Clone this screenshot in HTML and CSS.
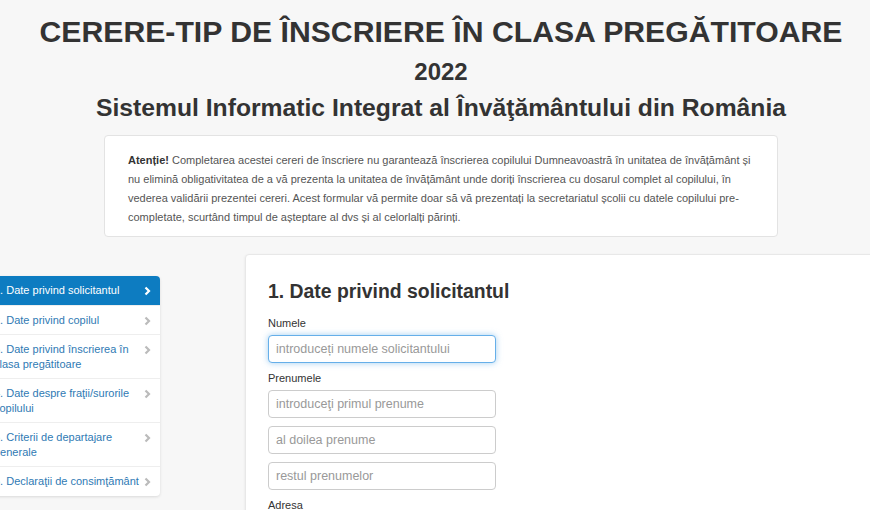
FILE: index.html
```html
<!DOCTYPE html>
<html lang="ro">
<head>
    <meta charset="UTF-8">
    <meta name="viewport" content="width=device-width, initial-scale=1.0">
    <title>Cerere-tip de înscriere în clasa pregătitoare</title>
    <link rel="stylesheet" href="styles.css">
</head>
<body>
    <div class="page">
        <div class="header">
            <h1>CERERE-TIP DE ÎNSCRIERE ÎN CLASA PREGĂTITOARE</h1>
            <h2>2022</h2>
            <h3>Sistemul Informatic Integrat al Învăţământului din România</h3>
        </div>

        <div class="notice">
            <p><strong>Atenție!</strong> Completarea acestei cereri de înscriere nu garantează înscrierea copilului Dumneavoastră în unitatea de învățământ și nu elimină obligativitatea de a vă prezenta la unitatea de învățământ unde doriți înscrierea cu dosarul complet al copilului, în vederea validării prezentei cereri. Acest formular vă permite doar să vă prezentați la secretariatul școlii cu datele copilului pre-completate, scurtând timpul de așteptare al dvs și al celorlalți părinți.</p>
        </div>

        <div class="content">
            <div class="steps">
                <a class="step active" href="#">1. Date privind solicitantul
                    <svg class="chev" viewBox="0 0 7 10"><path d="M1.5 1.5 L5 5 L1.5 8.5"/></svg></a>
                <a class="step" href="#">2. Date privind copilul
                    <svg class="chev" viewBox="0 0 7 10"><path d="M1.5 1.5 L5 5 L1.5 8.5"/></svg></a>
                <a class="step" href="#">3. Date privind înscrierea în clasa pregătitoare
                    <svg class="chev" viewBox="0 0 7 10"><path d="M1.5 1.5 L5 5 L1.5 8.5"/></svg></a>
                <a class="step" href="#">4. Date despre fraţii/surorile copilului
                    <svg class="chev" viewBox="0 0 7 10"><path d="M1.5 1.5 L5 5 L1.5 8.5"/></svg></a>
                <a class="step" href="#">5. Criterii de departajare generale
                    <svg class="chev" viewBox="0 0 7 10"><path d="M1.5 1.5 L5 5 L1.5 8.5"/></svg></a>
                <a class="step" href="#">6. Declaraţii de consimţământ
                    <svg class="chev" viewBox="0 0 7 10"><path d="M1.5 1.5 L5 5 L1.5 8.5"/></svg></a>
            </div>

            <div class="panel">
                <h4>1. Date privind solicitantul</h4>
                <label>Numele</label>
                <input class="field focused" type="text" placeholder="introduceți numele solicitantului">
                <label>Prenumele</label>
                <input class="field" type="text" placeholder="introduceţi primul prenume">
                <input class="field" type="text" placeholder="al doilea prenume">
                <input class="field" type="text" placeholder="restul prenumelor">
                <label>Adresa</label>
            </div>
        </div>
    </div>
</body>
</html>
```

FILE: styles.css
```css
* {
    margin: 0;
    padding: 0;
    box-sizing: border-box;
}

body {
    font-family: "Liberation Sans", Arial, sans-serif;
    background: #f7f7f7;
    color: #333;
    overflow: hidden;
}

.page {
    width: 870px;
    height: 510px;
    overflow: hidden;
}

.header {
    text-align: center;
    padding: 14px 0 0 12px;
}

.header h1 {
    font-size: 30.2px;
    line-height: 36px;
    font-weight: bold;
    color: #333;
}

.header h2 {
    font-size: 24px;
    line-height: 28px;
    margin-top: 8px;
}

.header h3 {
    font-size: 24.7px;
    line-height: 32px;
    margin-top: 6px;
}

.notice {
    margin: 11px 92px 0 104px;
    background: #fff;
    border: 1px solid #e3e3e3;
    border-radius: 4px;
    padding: 15px 23px 9px 23px;
}

.notice p {
    font-size: 11px;
    line-height: 19px;
    color: #555;
}

.notice strong {
    color: #333;
}

.content {
    display: flex;
    align-items: flex-start;
    margin-top: 17px;
}

.steps {
    flex-shrink: 0;
    width: 176px;
    margin-left: -16px;
    margin-top: 22px;
    background: #fff;
    border-radius: 4px;
    box-shadow: 0 1px 3px rgba(0,0,0,0.12);
    display: flex;
    flex-direction: column;
}

.step {
    position: relative;
    display: block;
    padding: 7px 14px 7px 10px;
    font-size: 11px;
    line-height: 14.5px;
    color: #2f7ab4;
    text-decoration: none;
    border-top: 1px solid #eee;
}

.step:first-child {
    border-top: none;
    border-radius: 4px 4px 0 0;
}

.step.active {
    background: #0d7cc1;
    color: #fff;
}

.chev {
    position: absolute;
    right: 9px;
    top: 10px;
    width: 7px;
    height: 10px;
    fill: none;
    stroke: #bbb;
    stroke-width: 2.2;
}

.step.active .chev {
    stroke: #fff;
}

.panel {
    flex-shrink: 0;
    margin-left: 85px;
    width: 700px;
    height: 300px;
    background: #fff;
    border: 1px solid #e8e8e8;
    border-radius: 4px;
    box-shadow: 0 1px 3px rgba(0,0,0,0.08);
    padding: 24px 22px;
}

.panel h4 {
    font-size: 19.4px;
    line-height: 24px;
    color: #333;
    margin-bottom: 13px;
}

.panel label {
    display: block;
    font-size: 11px;
    line-height: 14px;
    margin-bottom: 5px;
}

.field {
    display: block;
    width: 228px;
    height: 28px;
    border: 1px solid #ccc;
    border-radius: 4px;
    padding: 0 7px;
    font-family: "Liberation Sans", Arial, sans-serif;
    font-size: 12.5px;
    color: #555;
    margin-bottom: 8px;
    outline: none;
}

.field::placeholder {
    color: #999;
}

.field.focused {
    border-color: #66afe9;
    box-shadow: 0 0 6px rgba(102,175,233,0.6);
    margin-bottom: 8px;
}
```
